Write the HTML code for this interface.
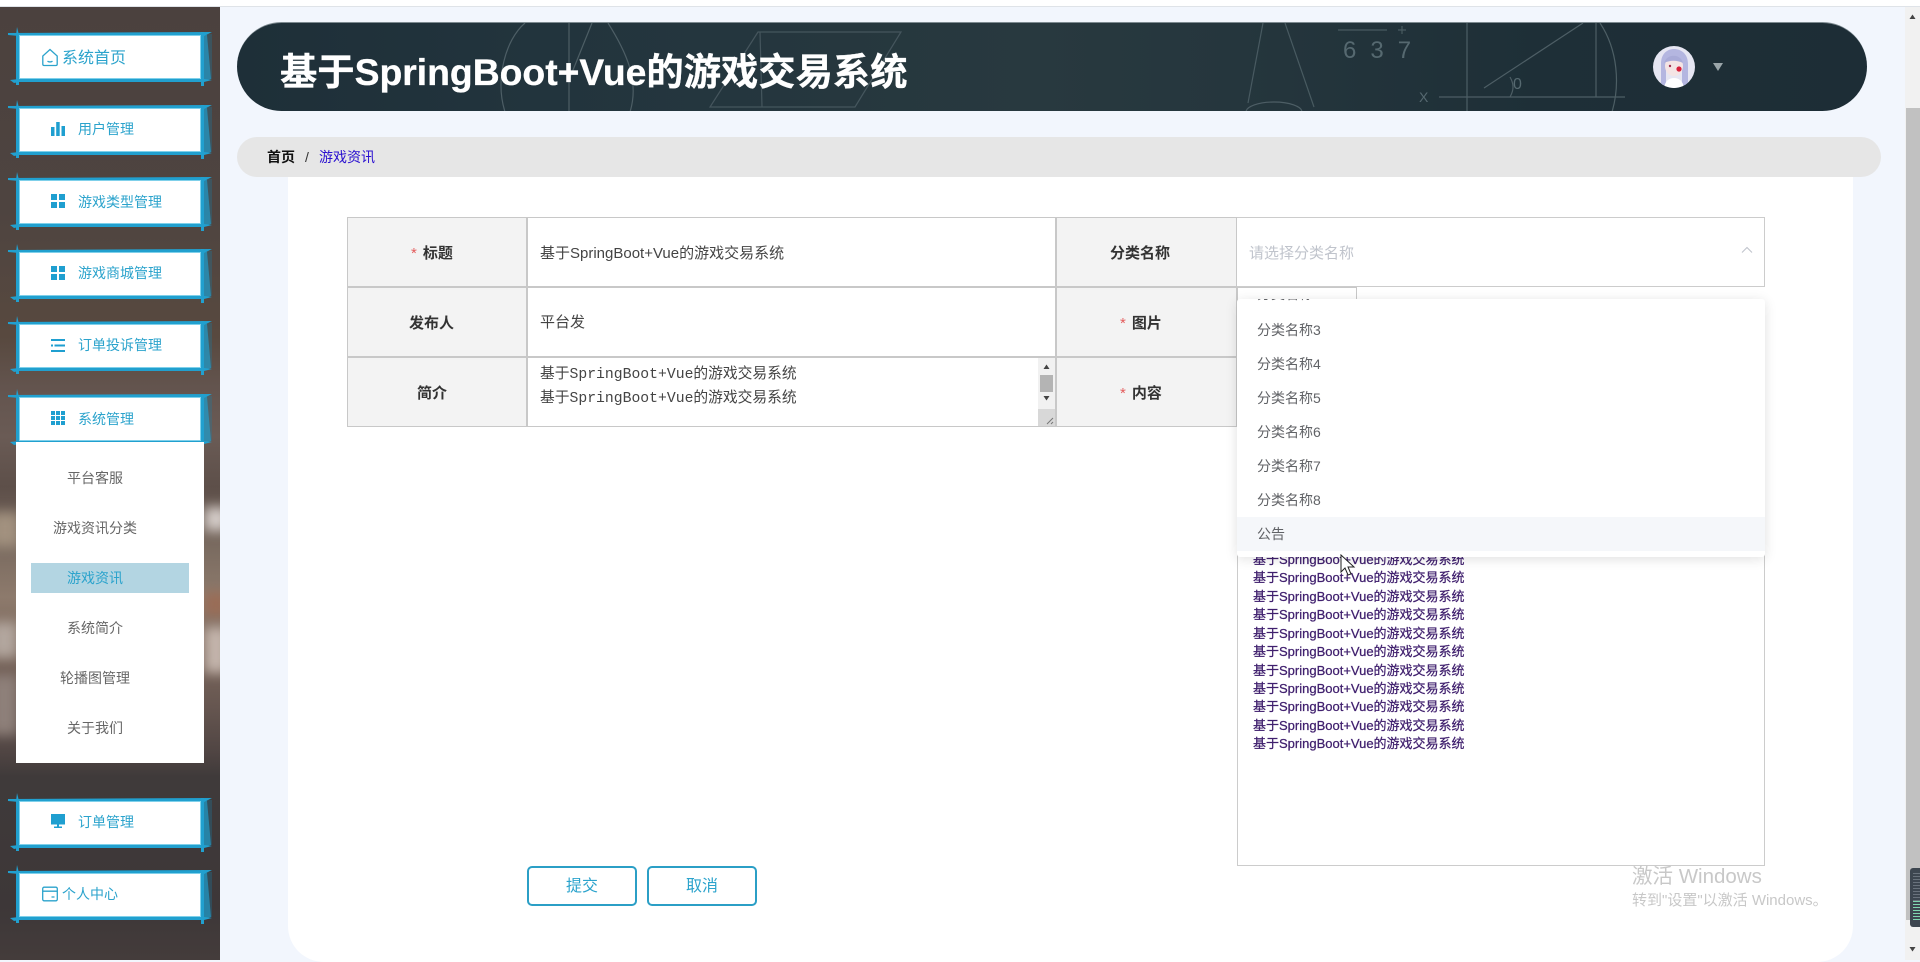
<!DOCTYPE html>
<html lang="zh-CN">
<head>
<meta charset="utf-8">
<title>基于SpringBoot+Vue的游戏交易系统</title>
<style>
html,body{margin:0;padding:0;width:1920px;height:960px;overflow:hidden;background:#f2f6fd;font-family:"Liberation Sans","Noto Sans CJK SC",sans-serif}
*{box-sizing:border-box}
.a{position:absolute}
.t{position:absolute;white-space:nowrap;line-height:20px}
#side{left:0;top:7px;width:220px;height:953px;overflow:hidden;background:linear-gradient(180deg,#4b413e 0,#4e4440 200px,#58493f 330px,#63544e 380px,#6a5b55 430px,#5d4f49 480px,#7a6b60 540px,#8d7a6c 590px,#7c685d 640px,#665650 700px,#504543 745px,#3f3a3a 770px,#3d3738 900px,#443c3b 953px)}
.blob{position:absolute;filter:blur(6px)}
.m{position:absolute;left:0;width:220px;height:60px}
.m svg{position:absolute;left:0;top:0}
.m .t{top:20px;font-size:14px;color:#2ba3cc}
.m .i{position:absolute}
.s{position:absolute;left:16px;width:188px;text-align:center;font-size:14px;line-height:20px;color:#666;padding-right:30px}
.lab{position:absolute;background:#f3f3f3}
.lb{position:absolute;font-weight:bold;font-size:15px;line-height:20px;color:#333;white-space:nowrap}
.lb b{color:#e45c5c;font-weight:normal;margin-right:6px}
.ln{position:absolute;background:#c8c8c8}
.opt{position:absolute;left:20px;font-size:14px;line-height:20px;color:#606266;white-space:nowrap}
.c{position:absolute;left:15px;font-size:13px;line-height:18px;color:#40206e;white-space:nowrap;-webkit-text-stroke:.25px #40206e}
.btn{position:absolute;top:866px;width:110px;height:40px;border:2px solid #2b9fc6;border-radius:5px;background:#fff;text-align:center;font-size:16px;line-height:38px;color:#2ba3cc}
</style>
</head>
<body>
<svg width="0" height="0" style="position:absolute">
<defs>
<symbol id="deco" viewBox="0 0 220 60">
<polygon points="204,6 212,7 212,52 204,54" fill="#1c7fa6" opacity=".3"/>
<polygon points="204,6 207,8 211,52 204,54" fill="#21a0cf" opacity=".65"/>
<polygon points="8,6 212,5 204,9 19,9 8,8" fill="#21a0cf"/>
<polygon points="10,53 19,52 204,52 212,53 204,55 19,55 14,56" fill="#21a0cf"/>
<polygon points="17,0 19,8 19,58 16,58 16,8" fill="#21a0cf"/>
<polygon points="201,5 204,5 204,59 201,59" fill="#21a0cf"/>
<rect x="19" y="8" width="182" height="44" fill="#fff"/>
<rect x="19.500" y="8.500" width="181" height="43" fill="none" stroke="#7fd0ea" stroke-width="1"/>
</symbol>
<symbol id="g4" viewBox="0 0 14 14"><path d="M0 0h6v6H0zM8 0h6v6H8zM0 8h6v6H0zM8 8h6v6H8z" fill="#1f9fd0"/></symbol>
</defs>
</svg>

<!-- top strip -->
<div class="a" style="left:0;top:0;width:1920px;height:6px;background:#fff"></div>
<div class="a" style="left:0;top:6px;width:1920px;height:1px;background:#dfe3e8"></div>

<!-- sidebar -->
<div class="a" id="side">
  <div class="blob" style="left:-10px;top:505px;width:30px;height:35px;background:#a2917f"></div>
  <div class="blob" style="left:-10px;top:615px;width:28px;height:36px;background:#b2a69e"></div>
  <div class="blob" style="left:-10px;top:668px;width:28px;height:60px;background:#8e807a"></div>
  <div class="blob" style="left:204px;top:500px;width:24px;height:24px;background:#d4ccc8"></div>
  <div class="blob" style="left:204px;top:585px;width:24px;height:24px;background:#9a6c56"></div>
  <div class="blob" style="left:204px;top:620px;width:24px;height:46px;background:#c4b5ac"></div>
</div>

<div class="m" style="top:27px"><svg width="220" height="60"><use href="#deco"/></svg>
  <svg class="i" style="left:41px;top:21px" width="18" height="19" viewBox="0 0 18 19"><path d="M9 1.500 1.800 8v8.300a1.200 1.200 0 0 0 1.200 1.200h12a1.200 1.200 0 0 0 1.200-1.200V8z" fill="none" stroke="#2ba3cc" stroke-width="1.300"/><path d="M6.500 13.200c1.400 1 3.600 1 5 0" fill="none" stroke="#2ba3cc" stroke-width="1.300"/></svg>
  <span class="t" style="left:62px;top:22px;font-size:16px">系统首页</span></div>
<div class="m" style="top:100px"><svg width="220" height="60"><use href="#deco"/></svg>
  <svg class="i" style="left:51px;top:22px" width="14" height="14" viewBox="0 0 14 14"><path d="M0 5h3.500v9H0zM5.200 0h3.500v14H5.200zM10.500 4H14v10h-3.500z" fill="#1f9fd0"/></svg>
  <span class="t" style="left:78px;top:19px">用户管理</span></div>
<div class="m" style="top:172px"><svg width="220" height="60"><use href="#deco"/></svg>
  <svg class="i" style="left:51px;top:22px" width="14" height="14"><use href="#g4"/></svg>
  <span class="t" style="left:78px">游戏类型管理</span></div>
<div class="m" style="top:244px"><svg width="220" height="60"><use href="#deco"/></svg>
  <svg class="i" style="left:51px;top:22px" width="14" height="14"><use href="#g4"/></svg>
  <span class="t" style="left:78px;top:19px">游戏商城管理</span></div>
<div class="m" style="top:316px"><svg width="220" height="60"><use href="#deco"/></svg>
  <svg class="i" style="left:51px;top:23px" width="14" height="13" viewBox="0 0 14 13"><path d="M0 0h14v2H0zM3.500 5.500H14v2H3.500zM0 5.500h2v2H0zM0 11h14v2H0z" fill="#1f9fd0"/></svg>
  <span class="t" style="left:78px;top:19px">订单投诉管理</span></div>
<div class="m" style="top:389px"><svg width="220" height="60"><use href="#deco"/></svg>
  <svg class="i" style="left:51px;top:22px" width="14" height="14" viewBox="0 0 14 14"><path d="M0 0h4v4H0zM5 0h4v4H5zM10 0h4v4h-4zM0 5h4v4H0zM5 5h4v4H5zM10 5h4v4h-4zM0 10h4v4H0zM5 10h4v4H5zM10 10h4v4h-4z" fill="#1f9fd0"/></svg>
  <span class="t" style="left:78px">系统管理</span></div>

<!-- submenu -->
<div class="a" style="left:16px;top:442px;width:188px;height:321px;background:#fff"></div>
<div class="a" style="left:31px;top:563px;width:158px;height:30px;background:#b3d5e2"></div>
<div class="s" style="top:468px">平台客服</div>
<div class="s" style="top:518px">游戏资讯分类</div>
<div class="s" style="top:568px;color:#2ba3cc">游戏资讯</div>
<div class="s" style="top:618px">系统简介</div>
<div class="s" style="top:668px">轮播图管理</div>
<div class="s" style="top:718px">关于我们</div>

<div class="m" style="top:793px"><svg width="220" height="60"><use href="#deco"/></svg>
  <svg class="i" style="left:51px;top:21px" width="14" height="14" viewBox="0 0 14 14"><path d="M0 0h14v10.500H0zM6 10.500h2v2h3V14H3v-1.500h3z" fill="#1f9fd0"/></svg>
  <span class="t" style="left:78px;top:19px">订单管理</span></div>
<div class="m" style="top:865px"><svg width="220" height="60"><use href="#deco"/></svg>
  <svg class="i" style="left:42px;top:21px" width="16" height="16" viewBox="0 0 16 16"><rect x=".7" y="1.200" width="14.600" height="13.600" rx="1.500" fill="none" stroke="#2ba3cc" stroke-width="1.300"/><path d="M.7 5.200h14.600M9.500 11h3" stroke="#2ba3cc" stroke-width="1.300" fill="none"/></svg>
  <span class="t" style="left:62px;top:19px">个人中心</span></div>

<!-- main white panel -->
<div class="a" style="left:288px;top:177px;width:1565px;height:785px;background:#fff;border-radius:0 0 36px 36px"></div>

<!-- header -->
<div class="a" style="left:237px;top:22px;width:1630px;height:89px;border-radius:45px;overflow:hidden;background:linear-gradient(90deg,#1e2f38 0,#22343d 300px,#28393f 800px,#25363d 1000px,#1e2f37 1300px,#1d2d36 1630px);border-top:1px solid #7d8a90">
  <svg width="1630" height="89" style="position:absolute;left:0;top:0" fill="none" stroke="#4d5e65" stroke-width="1.200">
    <g transform="translate(-237,-23)">
      <path d="M505 112C495 80 505 40 525 23M569 23V112M592 23 569 80M608 23C625 50 640 80 630 112"/>
      <path d="M758 32H901L855 107H710ZM760 32 762 107" opacity=".8"/>
      <path d="M1263 23 1248 103M1285 23 1314 107M1338 30H1387M1402 26V34M1398 30H1406" opacity=".9"/>
      <ellipse cx="1274" cy="112" rx="28" ry="10"/>
      <path d="M1467 23V112M1484 88 1583 23M1596 23V97M1439 97H1625M1510 77C1514 84 1514 90 1510 97M1600 23C1618 50 1620 85 1612 112"/>
    </g>
    <g font-family="Liberation Sans,sans-serif" font-size="24" fill="#566970" stroke="none">
      <text x="1106" y="35" letter-spacing="14">637</text>
      <text x="1182" y="79" font-size="14">X</text>
      <text x="1276" y="66" font-size="16">0</text>
    </g>
  </svg>
</div>
<div class="t" style="left:280px;top:47px;font-size:37.300px;line-height:50px;font-weight:bold;color:#fff;-webkit-text-stroke:.3px #fff">基于SpringBoot+Vue的游戏交易系统</div>
<svg class="a" style="left:1653px;top:46px" width="42" height="42" viewBox="0 0 42 42">
  <defs><clipPath id="av"><circle cx="21" cy="21" r="21"/></clipPath></defs>
  <g clip-path="url(#av)">
    <rect width="42" height="42" fill="#e6e6f2"/>
    <path d="M8 42V18C8 6 16 3 21 3s14 3 14 15v24h-6V20H13v22z" fill="#b4b6e0"/>
    <ellipse cx="21" cy="20" rx="9" ry="10" fill="#f4e4e4"/>
    <path d="M11 17c2-6 7-8 12-7 3 .5 6 3 7 7-6-3-13-3-19 0z" fill="#a9abd8"/>
    <circle cx="26" cy="23" r="2.600" fill="#d8203a"/>
    <circle cx="17" cy="20" r="1.200" fill="#a03050"/>
    <path d="M11 42c1-7 5-10 10-10s9 3 10 10z" fill="#fff"/>
  </g>
</svg>
<svg class="a" style="left:1713px;top:63px" width="10" height="8"><path d="M0 0h10L5 8z" fill="#9aa5a9"/></svg>

<!-- breadcrumb -->
<div class="a" style="left:237px;top:137px;width:1644px;height:40px;border-radius:20px;background:#e6e6e6"></div>
<div class="t" style="left:267px;top:147px;font-size:14px;font-weight:bold;color:#111">首页</div>
<div class="t" style="left:305px;top:147px;font-size:14px;color:#333">/</div>
<div class="t" style="left:319px;top:147px;font-size:14px;color:#2a10d0">游戏资讯</div>

<!-- form table -->
<div class="lab" style="left:347px;top:217px;width:180px;height:210px"></div>
<div class="lab" style="left:1056px;top:217px;width:181px;height:210px"></div>
<div class="ln" style="left:347px;top:217px;width:890px;height:1px"></div>
<div class="ln" style="left:347px;top:286px;width:890px;height:2px"></div>
<div class="ln" style="left:347px;top:356px;width:890px;height:2px"></div>
<div class="ln" style="left:347px;top:426px;width:890px;height:1px"></div>
<div class="ln" style="left:347px;top:217px;width:1px;height:210px"></div>
<div class="ln" style="left:526px;top:217px;width:2px;height:210px"></div>
<div class="ln" style="left:1055px;top:217px;width:2px;height:210px"></div>
<div class="ln" style="left:1236px;top:217px;width:2px;height:210px"></div>

<div class="lb" style="left:411px;top:244px"><b>*</b>标题</div>
<div class="lb" style="left:409px;top:314px">发布人</div>
<div class="lb" style="left:417px;top:384px">简介</div>
<div class="lb" style="left:1110px;top:244px">分类名称</div>
<div class="lb" style="left:1120px;top:314px"><b>*</b>图片</div>
<div class="lb" style="left:1120px;top:384px"><b>*</b>内容</div>

<div class="t" style="left:540px;top:244px;font-size:15px;color:#444">基于SpringBoot+Vue的游戏交易系统</div>
<div class="t" style="left:540px;top:313px;font-size:15px;color:#444">平台发</div>
<div class="t" style="left:540px;top:363px;font-family:'Liberation Mono','Noto Sans CJK SC',monospace;font-size:14.750px;line-height:24px;color:#444">基于SpringBoot+Vue的游戏交易系统<br>基于SpringBoot+Vue的游戏交易系统</div>

<!-- textarea scrollbar -->
<div class="a" style="left:1038px;top:358px;width:17px;height:68px;background:#f1f1f1"></div>
<div class="a" style="left:1040px;top:375px;width:13px;height:17px;background:#b4b4b4"></div>
<div class="a" style="left:1038px;top:409px;width:17px;height:17px;background:#d8d8d8"></div>
<svg class="a" style="left:1038px;top:358px" width="17" height="68"><path d="M5.500 11 8.500 6.500l3 4.500zM5.500 38l3 4.500 3-4.500z" fill="#444"/><path d="M9 66l6-6M13 66l2-2" stroke="#777" stroke-width="1"/></svg>

<!-- select -->
<div class="a" style="left:1237px;top:217px;width:528px;height:70px;border:1px solid #ccc;border-left:0;background:#fff"></div>
<div class="t" style="left:1249px;top:244px;font-size:15px;color:#c0c4cc">请选择分类名称</div>
<svg class="a" style="left:1741px;top:246px" width="12" height="8"><path d="M1 6.500 6 1.500l5 5" fill="none" stroke="#c0c4cc" stroke-width="1.100"/></svg>

<!-- image box remainder -->
<div class="a" style="left:1237px;top:287px;width:120px;height:20px;border-right:1px solid #c8c8c8;border-top:1px solid #c8c8c8"></div>

<!-- content editor -->
<div class="a" style="left:1237px;top:540px;width:528px;height:326px;background:#fff;border:1px solid #ccc;border-top:0">
  <div class="c" style="top:11px">基于SpringBoot+Vue的游戏交易系统</div>
  <div class="c" style="top:29px">基于SpringBoot+Vue的游戏交易系统</div>
  <div class="c" style="top:48px">基于SpringBoot+Vue的游戏交易系统</div>
  <div class="c" style="top:66px">基于SpringBoot+Vue的游戏交易系统</div>
  <div class="c" style="top:85px">基于SpringBoot+Vue的游戏交易系统</div>
  <div class="c" style="top:103px">基于SpringBoot+Vue的游戏交易系统</div>
  <div class="c" style="top:122px">基于SpringBoot+Vue的游戏交易系统</div>
  <div class="c" style="top:140px">基于SpringBoot+Vue的游戏交易系统</div>
  <div class="c" style="top:158px">基于SpringBoot+Vue的游戏交易系统</div>
  <div class="c" style="top:177px">基于SpringBoot+Vue的游戏交易系统</div>
  <div class="c" style="top:195px">基于SpringBoot+Vue的游戏交易系统</div>
</div>

<!-- dropdown -->
<div class="a" style="left:1237px;top:299px;width:528px;height:258px;background:#fff;border-radius:3px;box-shadow:0 2px 12px rgba(0,0,0,.12);overflow:hidden">
  <div class="opt" style="top:-15px">分类名称2</div>
  <div class="opt" style="top:21px">分类名称3</div>
  <div class="opt" style="top:55px">分类名称4</div>
  <div class="opt" style="top:89px">分类名称5</div>
  <div class="opt" style="top:123px">分类名称6</div>
  <div class="opt" style="top:157px">分类名称7</div>
  <div class="opt" style="top:191px">分类名称8</div>
  <div class="a" style="left:0;top:218px;width:528px;height:34px;background:#f5f7fa"></div>
  <div class="opt" style="top:225px">公告</div>
</div>

<!-- cursor -->
<svg class="a" style="left:1340px;top:554px" width="16" height="24" viewBox="0 0 16 24"><path d="M1 1v17l4-4 3 7 3-1-3-7h6z" fill="#fff" stroke="#222" stroke-width="1"/></svg>

<!-- buttons -->
<div class="btn" style="left:527px">提交</div>
<div class="btn" style="left:647px">取消</div>

<!-- watermark -->
<div class="t" style="left:1632px;top:865px;font-size:20.500px;line-height:24px;color:#c8c8c8">激活 Windows</div>
<div class="t" style="left:1632px;top:891px;font-size:15px;color:#c8c8c8">转到"设置"以激活 Windows。</div>

<!-- page scrollbar -->
<div class="a" style="left:1905px;top:7px;width:15px;height:953px;background:#f1f1f1"></div>
<div class="a" style="left:1906px;top:108px;width:14px;height:812px;background:#c1c1c1"></div>
<svg class="a" style="left:1905px;top:7px" width="15" height="953"><path d="M4.500 12 7.500 7.500l3 4.500zM4.500 940l3 4.500 3-4.500z" fill="#444"/></svg>
<div class="a" style="left:1910px;top:868px;width:10px;height:59px;background:#3d4650;border-radius:3px 0 0 3px"></div>
<div class="a" style="left:1913px;top:873px;width:7px;height:28px;background:repeating-linear-gradient(180deg,#69727c 0,#69727c 1px,#3d4650 1px,#3d4650 3px)"></div>
<div class="a" style="left:1913px;top:901px;width:7px;height:20px;background:repeating-linear-gradient(180deg,#7fd6b0 0,#7fd6b0 1px,#3d4650 1px,#3d4650 3px)"></div>
</body>
</html>
